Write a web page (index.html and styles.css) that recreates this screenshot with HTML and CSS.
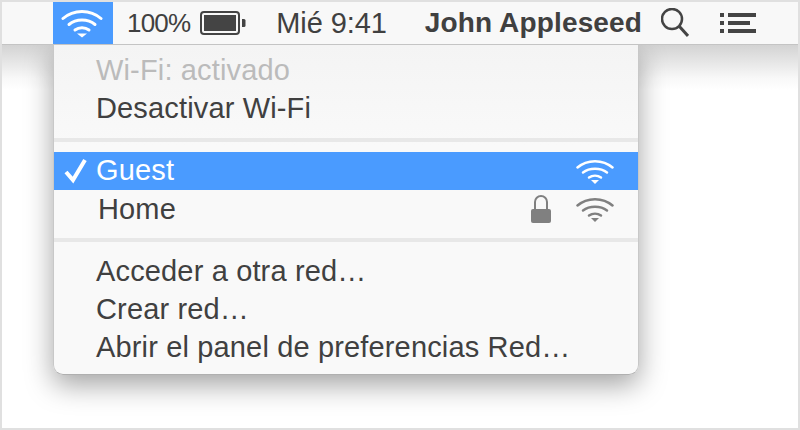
FILE: index.html
```html
<!DOCTYPE html>
<html lang="es">
<head>
    <meta charset="UTF-8">
    <title>Menú Wi-Fi</title>
    <link rel="stylesheet" href="styles.css">
</head>
<body>
<div class="frame">
    <div class="menubar">
        <div class="wifi-tab">
            <svg class="wifi-big" viewBox="0 0 42 29" width="42" height="29">
                <path d="M2 9.500C12.500 0 29.500 0 40 9.500" class="arc-white-big"/>
                <path d="M8 15.500C15 9.500 27 9.500 34 15.500" class="arc-white-big"/>
                <path d="M14 21C18 18 24 18 28 21" class="arc-white-big"/>
                <path d="M16 24.500H26L21 28.500Z" fill="#fff"/>
            </svg>
        </div>
        <span class="battery-pct">100%</span>
        <svg class="battery" viewBox="0 0 46 24" width="46" height="24">
            <rect x="1" y="1" width="38" height="22" rx="3" fill="none" stroke="#444" stroke-width="2"/>
            <rect x="4" y="4" width="32" height="16" fill="#444"/>
            <path d="M42 8h2a1.500 1.500 0 0 1 1.500 1.500v5a1.500 1.500 0 0 1-1.500 1.500h-2z" fill="#444"/>
        </svg>
        <span class="clock">Mié 9:41</span>
        <span class="user">John Appleseed</span>
        <svg class="search" viewBox="0 0 28 30" width="28" height="30">
            <circle cx="11" cy="11" r="10" fill="none" stroke="#444" stroke-width="2.500"/>
            <path d="M18 18L27 28" stroke="#444" stroke-width="3" fill="none"/>
        </svg>
        <svg class="list-icon" viewBox="0 0 36 22" width="36" height="22">
            <path d="M0 1h4v4H0zM8 1h28v4H8zM0 9h4v4H0zM8 9h22v4H8zM0 17h4v4H0zM8 17h28v4H8z" fill="#444"/>
        </svg>
    </div>

    <div class="menu">
        <div class="row disabled">Wi-Fi: activado</div>
        <div class="row">Desactivar Wi-Fi</div>
        <div class="sep sep-first"></div>
        <div class="row selected">
            <svg class="check" viewBox="0 0 32 28" width="32" height="28">
                <path d="M2 15L9 23L21 3" fill="none" stroke="#fff" stroke-width="4"/>
            </svg>
            <span class="net-name">Guest</span>
            <svg class="wifi-small" viewBox="0 0 38 25" width="38" height="25">
                <path d="M1.500 8.500C11 0 27 0 36.500 8.500" class="arc-white"/>
                <path d="M7 13.500C13.500 8.500 24.500 8.500 31 13.500" class="arc-white"/>
                <path d="M13 18.500C16.500 16 21.500 16 25 18.500" class="arc-white"/>
                <path d="M15 21h8l-4 4z" fill="#fff"/>
            </svg>
        </div>
        <div class="row home-row">
            <span class="net-name">Home</span>
            <svg class="lock" viewBox="0 0 20 28" width="20" height="28">
                <path d="M4 14V7a6 6 0 0 1 12 0v7" fill="none" stroke="#808080" stroke-width="2"/>
                <rect x="0" y="14" width="20" height="14" rx="2" fill="#808080"/>
            </svg>
            <svg class="wifi-small" viewBox="0 0 38 25" width="38" height="25">
                <path d="M1.500 8.500C11 0 27 0 36.500 8.500" class="arc-gray"/>
                <path d="M7 13.500C13.500 8.500 24.500 8.500 31 13.500" class="arc-gray"/>
                <path d="M13 18.500C16.500 16 21.500 16 25 18.500" class="arc-gray"/>
                <path d="M15 21h8l-4 4z" fill="#808080"/>
            </svg>
        </div>
        <div class="sep"></div>
        <div class="row">Acceder a otra red…</div>
        <div class="row">Crear red…</div>
        <div class="row">Abrir el panel de preferencias Red…</div>
    </div>
</div>
</body>
</html>
```

FILE: styles.css
```css
body {
    margin: 0;
}

.frame {
    width: 800px;
    height: 430px;
    box-sizing: border-box;
    border: 2px solid #e0e0e0;
    overflow: hidden;
    background: linear-gradient(#d3d3d3 43px, #e6e6e6 60px, #f8f8f8 76px, #fff 88px);
    font-family: "Liberation Sans", Arial, sans-serif;
    font-size: 29px;
    letter-spacing: 0.15px;
    color: #404040;
}

.menubar {
    position: relative;
    z-index: 1;
    display: flex;
    align-items: center;
    height: 42px;
    background-color: #f8f8f8;
    border-bottom: 1px solid #c4c4c4;
}

.wifi-tab {
    display: flex;
    align-items: center;
    justify-content: center;
    width: 60px;
    height: 42px;
    margin-left: 51px;
    background-color: #4a9bff;
}

.wifi-big {
    margin-right: 2px;
}

.battery-pct {
    margin-left: 14px;
    font-size: 26px;
    letter-spacing: -0.8px;
}

.battery {
    margin-left: 10px;
}

.clock {
    margin-left: 30px;
    letter-spacing: -0.1px;
}

.user {
    margin-left: 38px;
    font-size: 28px;
    font-weight: bold;
}

.search {
    margin-left: 19px;
}

.list-icon {
    margin-left: 31px;
}

.arc-white-big,
.arc-white,
.arc-gray {
    fill: none;
    stroke-linecap: round;
}

.arc-white-big {
    stroke: #fff;
    stroke-width: 3;
}

.arc-white {
    stroke: #fff;
    stroke-width: 2.5;
}

.arc-gray {
    stroke: #808080;
    stroke-width: 2.5;
}

.menu {
    width: 584px;
    margin-left: 51px;
    padding: 6px 0 8px;
    background: linear-gradient(#f4f4f4, #f9f9f9 100px);
    border-left: 1px solid #c8c8c8;
    border-right: 1px solid #c8c8c8;
    border-bottom: 1px solid #b0b0b0;
    border-radius: 0 0 10px 10px;
    box-shadow: 0 10px 28px rgba(0, 0, 0, 0.36);
}

.row {
    display: flex;
    align-items: center;
    height: 38px;
    padding-left: 42px;
}

.disabled {
    color: #bbb;
}

.sep {
    height: 4px;
    margin: 10px 0;
    background-color: #e8e8e8;
}

.sep-first {
    margin-top: 11px;
}

.selected {
    padding-left: 10px;
    background-color: #4a9bff;
    color: #fff;
}

.selected .net-name {
    margin-bottom: 2px;
}

.check {
    flex: none;
}

.net-name {
    flex: 1;
}

.home-row {
    padding-left: 44px;
}

.wifi-small {
    margin-right: 24px;
}

.lock {
    margin-right: 25px;
}
```
